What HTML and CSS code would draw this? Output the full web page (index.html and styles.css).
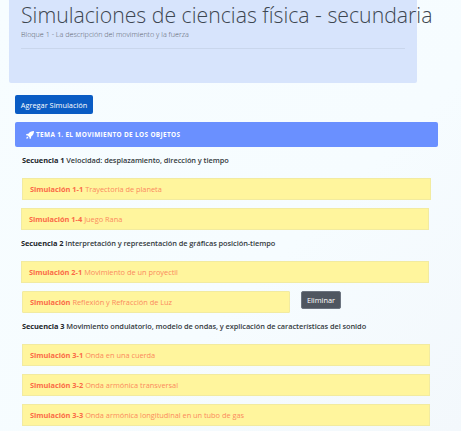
FILE: index.html
```html
<!DOCTYPE html>
<html lang="es">
<head>
    <meta charset="UTF-8">
    <meta name="viewport" content="width=device-width, initial-scale=1.0">
    <title>Simulaciones de ciencias física - secundaria</title>
    <link rel="stylesheet" href="styles.css">
</head>
<body>
    <header class="jumbotron">
        <h1>Simulaciones de ciencias física - secundaria</h1>
        <p class="lead">Bloque 1 - La descripción del movimiento y la fuerza</p>
        <hr>
    </header>

    <main class="content">
        <button type="button" class="btn-add">Agregar Simulación</button>

        <div class="card-header">
            <svg class="rocket" viewBox="0 0 12 12" width="8" height="8" aria-hidden="true">
                <path d="M12 0C8 0 5.5 1.5 3.6 4.2L.6 4.6 0 6.4l2.5.4 2.7 2.7.4 2.5 1.8-.6.4-3C10.500 6.500 12 4 12 0zM1.800 8.300C.9 9 .6 10.500.4 11.600c1.100-.2 2.600-.5 3.300-1.400z"/>
            </svg>
            TEMA 1. EL MOVIMIENTO DE LOS OBJETOS
        </div>

        <section class="seq seq-1">
            <p class="seq-title"><b>Secuencia 1</b> Velocidad: desplazamiento, dirección y tiempo</p>
            <div class="alert wide"><b>Simulación 1-1</b> Trayectoria de planeta</div>
            <div class="alert shift"><b>Simulación 1-4</b> Juego Rana</div>
        </section>

        <section class="seq seq-2">
            <p class="seq-title"><b>Secuencia 2</b> Interpretación y representación de gráficas posición-tiempo</p>
            <div class="alert"><b>Simulación 2-1</b> Movimiento de un proyectil</div>
            <div class="row">
                <div class="alert short"><b>Simulación</b> Reflexión y Refracción de Luz</div>
                <button type="button" class="btn-del">Eliminar</button>
            </div>
        </section>

        <section class="seq seq-3">
            <p class="seq-title"><b>Secuencia 3</b> Movimiento ondulatorio, modelo de ondas, y explicación de características del sonido</p>
            <div class="alert"><b>Simulación 3-1</b> Onda en una cuerda</div>
            <div class="alert"><b>Simulación 3-2</b> Onda armónica transversal</div>
            <div class="alert"><b>Simulación 3-3</b> Onda armónica longitudinal en un tubo de gas</div>
        </section>
    </main>
</body>
</html>
```

FILE: styles.css
```css
html, body {
    height: 100%;
}

body {
    font-family: "Open Sans", "Noto Sans", sans-serif;
    background: linear-gradient(135deg, #f7fdff 0%, #f6fcff 60%, #f3f8fc 100%);
    margin: 0;
    color: #212529;
    overflow: hidden;
}

.jumbotron {
    box-sizing: border-box;
    width: 408px;
    height: 83px;
    margin-left: 9px;
    padding: 0 12px;
    background-color: #d7e4fc;
    border-radius: 0 0 2px 2px;
}

h1 {
    margin: 0;
    font-size: 21.250px;
    line-height: 29px;
    font-weight: 300;
    color: #3d4650;
    white-space: nowrap;
}

.lead {
    margin: -1px 0 0;
    font-size: 7.200px;
    line-height: 12px;
    font-weight: 300;
    color: #59616a;
}

hr {
    margin: 8px 0 0;
    border: 0;
    border-top: 1px solid #c9d6ec;
}

.content {
    padding: 12px 0 0 15px;
}

.btn-add {
    display: block;
    box-sizing: border-box;
    width: 78px;
    height: 19px;
    padding: 0;
    background-color: #0a5cc4;
    color: #fff;
    border: 0;
    border-radius: 2px;
    font-family: inherit;
    font-size: 7.400px;
}

.card-header {
    box-sizing: border-box;
    display: flex;
    align-items: center;
    gap: 2px;
    width: 423px;
    height: 25px;
    margin-top: 8px;
    padding-left: 11px;
    background-color: #6a90ff;
    border-radius: 2px;
    color: #fff;
    font-size: 6.400px;
    font-weight: 700;
    letter-spacing: 0.36px;
}

.rocket {
    fill: #fff;
}

.seq-title {
    margin: 0;
    font-size: 7.400px;
    line-height: 12px;
    letter-spacing: -0.06px;
    color: #343a40;
    white-space: nowrap;
    font-weight: 600;
}

.seq-title b {
    color: #212529;
    font-weight: 700;
}

.seq-1 {
    margin: 7px 0 0 7px;
}

.seq-2 {
    margin: 7px 0 0 6px;
}

.seq-3 {
    margin: 7px 0 0 7px;
}

.alert {
    box-sizing: border-box;
    width: 408px;
    height: 22px;
    margin-top: 8px;
    padding-left: 7px;
    display: flex;
    align-items: center;
    gap: 2px;
    background-color: #fff59d;
    border: 1px solid #f2eba0;
    color: #fb8a5e;
    font-size: 7.400px;
    letter-spacing: -0.02px;
    white-space: nowrap;
}

.alert b {
    color: #fb6a47;
    font-weight: 700;
}

.seq-title + .alert {
    margin-top: 12px;
}

.wide {
    width: 409px;
}

.shift {
    margin-left: -1px;
}

.row {
    display: flex;
    align-items: flex-start;
    gap: 11px;
    margin-top: 8px;
    margin-left: 1px;
}

.row .alert {
    margin-top: 0;
}

.short {
    width: 268px;
    border-radius: 1px;
}

.btn-del {
    box-sizing: border-box;
    width: 40px;
    height: 18px;
    padding: 0;
    background-color: #4f5660;
    color: #fff;
    border: 1px solid #6c7480;
    border-radius: 2px;
    font-family: inherit;
    font-size: 7.400px;
}
```
